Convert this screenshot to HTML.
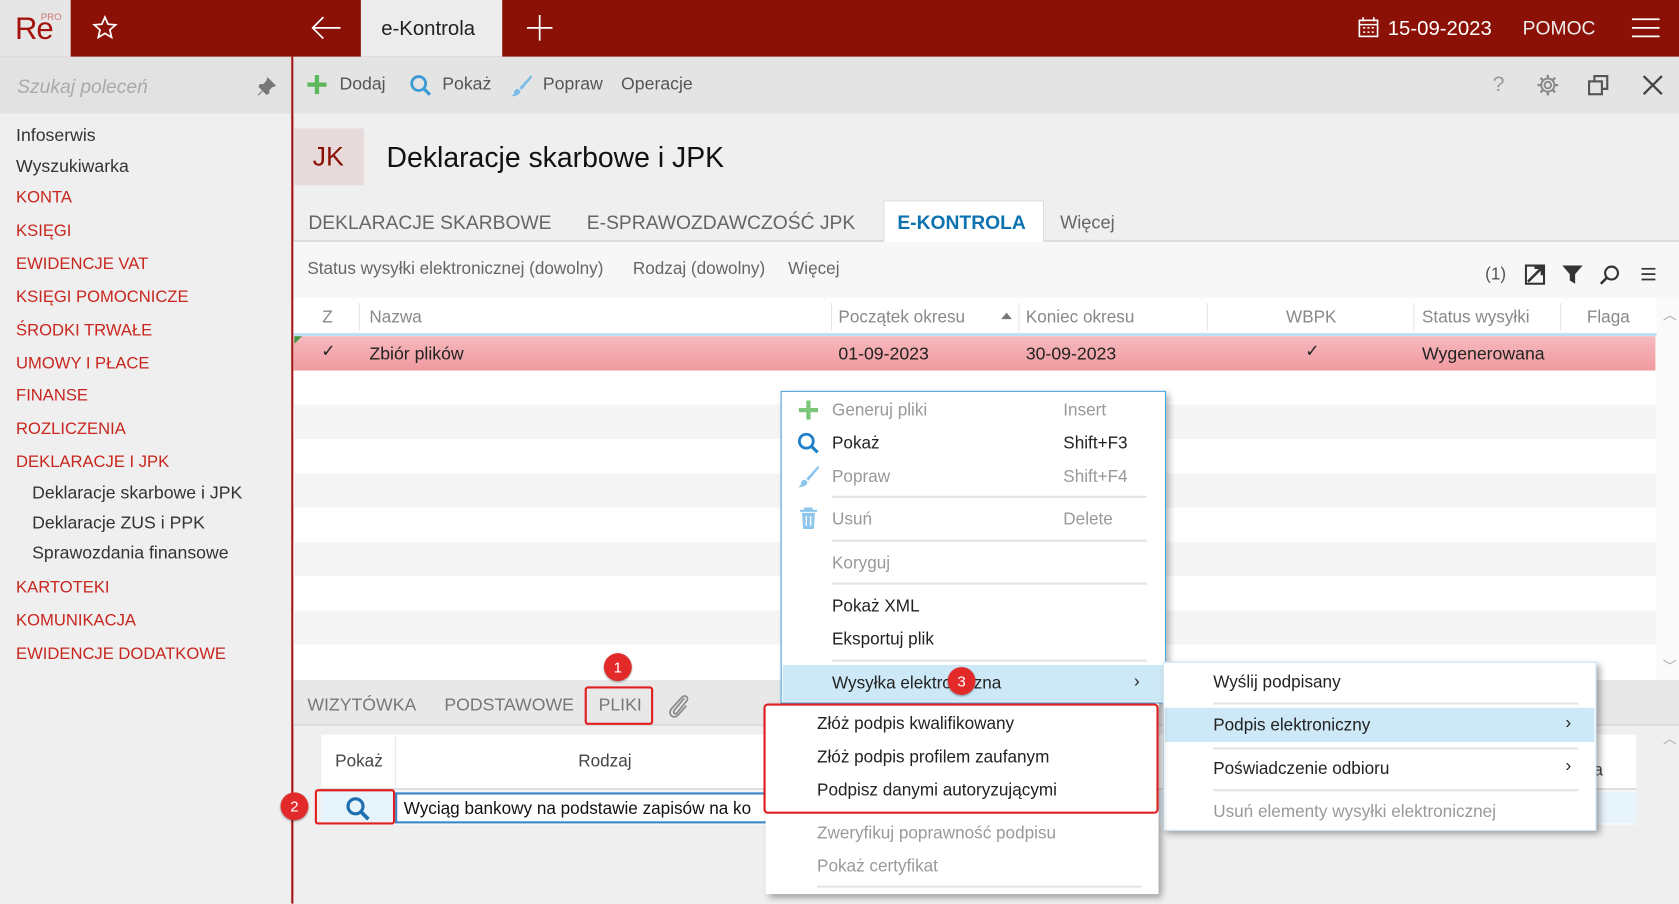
<!DOCTYPE html>
<html><head><meta charset="utf-8"><style>
*{margin:0;padding:0;box-sizing:border-box}
html,body{width:1679px;height:904px;overflow:hidden;background:#efefef}
#w{position:absolute;left:0;top:0;width:1568px;height:844px;transform:scale(1.07079);transform-origin:0 0;font-family:"Liberation Sans",sans-serif;color:#222;overflow:hidden;background:#efefef}
.a{position:absolute;white-space:nowrap}
.t{position:absolute;white-space:nowrap;transform:translateY(-50%);line-height:1}
.red{color:#c8261e;font-size:15.5px}
.sb{color:#333;font-size:16.5px}
.g{color:#999}
.sep{position:absolute;height:2px;background:#e4e4e4}
.badge{position:absolute;width:26px;height:26px;border-radius:50%;background:#e32a2a;color:#fff;font-size:14px;text-align:center;line-height:26px;box-shadow:0 1px 2px rgba(0,0,0,.4)}
</style></head><body><div id="w">
<!-- header -->
<div class="a" style="left:0;top:0;width:1568px;height:53px;background:#8b1106"></div>
<div class="a" style="left:0;top:0;width:66px;height:53px;background:#e6e6e6"></div>
<div class="t" style="left:14px;top:28px;font-size:29px;color:#a5140c;letter-spacing:-1px">Re</div>
<div class="t" style="left:38px;top:16px;font-size:9px;color:#c77">PRO</div>
<svg class="a" style="left:86px;top:14px" width="24" height="24" viewBox="0 0 24 24"><path d="M12 2l2.9 6.6 7.1.6-5.4 4.7 1.6 7-6.2-3.7-6.2 3.7 1.6-7L2 9.2l7.1-.6z" fill="none" stroke="#fff" stroke-width="1.6"/></svg>
<svg class="a" style="left:289px;top:14px" width="30" height="24"><path d="M29 12H3M13 2L3 12l10 10" fill="none" stroke="#fff" stroke-width="1.6"/></svg>
<div class="a" style="left:337px;top:0;width:132px;height:53px;background:#ececec"></div>
<div class="t" style="left:356px;top:27px;font-size:19px;color:#222">e-Kontrola</div>
<svg class="a" style="left:492px;top:14px" width="24" height="24"><path d="M12 0v24M0 12h24" stroke="#fff" stroke-width="1.6"/></svg>
<svg class="a" style="left:1268px;top:16px" width="20" height="20"><rect x="1.5" y="3" width="17" height="15" fill="none" stroke="#fff" stroke-width="1.5"/><path d="M1.5 7h17M5 0v4M15 0v4" stroke="#fff" stroke-width="1.5"/><path d="M5 10h2M9 10h2M13 10h2M5 14h2M9 14h2M13 14h2" stroke="#fff" stroke-width="1.5"/></svg>
<div class="t" style="left:1296px;top:27px;font-size:19px;color:#fff">15-09-2023</div>
<div class="t" style="left:1422px;top:26px;font-size:18px;color:#eee">POMOC</div>
<svg class="a" style="left:1524px;top:16px" width="26" height="20"><path d="M0 2h26M0 10h26M0 18h26" stroke="#fff" stroke-width="1.6"/></svg>
<!-- sidebar -->
<div class="a" style="left:0;top:53px;width:272px;height:53px;background:#e2e2e2"></div>
<div class="t" style="left:16px;top:81px;font-size:18px;font-style:italic;color:#aaa">Szukaj poleceń</div>
<svg class="a" style="left:240px;top:72px" width="18" height="18"><path d="M10 1l7 7-3 1-3 3 0 3-2 1-7-7 1-2 3 0 3-3z M5 13l-4 4" fill="#777" stroke="#777" stroke-width="1"/></svg>
<div class="a" style="left:272px;top:53px;width:2px;height:791px;background:#a31515"></div>
<div class="t sb" style="left:15px;top:127px">Infoserwis</div>
<div class="t sb" style="left:15px;top:156px">Wyszukiwarka</div>
<div class="t red" style="left:15px;top:185px">KONTA</div>
<div class="t red" style="left:15px;top:216px">KSIĘGI</div>
<div class="t red" style="left:15px;top:247px">EWIDENCJE VAT</div>
<div class="t red" style="left:15px;top:278px">KSIĘGI POMOCNICZE</div>
<div class="t red" style="left:15px;top:309px">ŚRODKI TRWAŁE</div>
<div class="t red" style="left:15px;top:340px">UMOWY I PŁACE</div>
<div class="t red" style="left:15px;top:370px">FINANSE</div>
<div class="t red" style="left:15px;top:401px">ROZLICZENIA</div>
<div class="t red" style="left:15px;top:432px">DEKLARACJE I JPK</div>
<div class="t sb" style="left:30px;top:461px">Deklaracje skarbowe i JPK</div>
<div class="t sb" style="left:30px;top:489px">Deklaracje ZUS i PPK</div>
<div class="t sb" style="left:30px;top:517px">Sprawozdania finansowe</div>
<div class="t red" style="left:15px;top:549px">KARTOTEKI</div>
<div class="t red" style="left:15px;top:580px">KOMUNIKACJA</div>
<div class="t red" style="left:15px;top:611px">EWIDENCJE DODATKOWE</div>
<!-- toolbar -->
<div class="a" style="left:274px;top:53px;width:1294px;height:53px;background:#e4e4e4"></div>
<svg class="a" style="left:287px;top:70px" width="18" height="18"><path d="M9 0v18M0 9h18" stroke="#5cb85c" stroke-width="4"/></svg>
<div class="t" style="left:317px;top:79px;font-size:16.5px;color:#555">Dodaj</div>
<svg class="a" style="left:382px;top:69px" width="22" height="22"><circle cx="9" cy="9" r="6.5" fill="none" stroke="#3a9bd5" stroke-width="2.6"/><path d="M13.5 13.5l6 6" stroke="#3a9bd5" stroke-width="3"/></svg>
<div class="t" style="left:413px;top:79px;font-size:16.5px;color:#555">Pokaż</div>
<svg class="a" style="left:476px;top:69px" width="22" height="22"><path d="M20 1L9 13l2 2L21 3z" fill="#7bbde6"/><path d="M8 14c-3 0-4 2-4 4 0 1-1 2-3 3 4 0 9-1 9-5z" fill="#7bbde6"/></svg>
<div class="t" style="left:507px;top:79px;font-size:16.5px;color:#555">Popraw</div>
<div class="t" style="left:580px;top:79px;font-size:16.5px;color:#555">Operacje</div>
<div class="t" style="left:1394px;top:79px;font-size:20px;color:#999">?</div>
<svg class="a" style="left:1435px;top:69px" width="21" height="21" viewBox="0 0 24 24"><circle cx="12" cy="12" r="3.5" fill="none" stroke="#888" stroke-width="2"/><path d="M12 1v4M12 19v4M1 12h4M19 12h4M4.2 4.2l2.8 2.8M17 17l2.8 2.8M4.2 19.8L7 17M17 7l2.8-2.8" stroke="#888" stroke-width="2.5"/><circle cx="12" cy="12" r="7" fill="none" stroke="#888" stroke-width="2"/></svg>
<svg class="a" style="left:1483px;top:70px" width="20" height="20"><rect x="1" y="6" width="12" height="12" fill="none" stroke="#555" stroke-width="2"/><path d="M6 6V1h12v12h-5" fill="none" stroke="#555" stroke-width="2"/></svg>
<svg class="a" style="left:1534px;top:70px" width="19" height="19"><path d="M1 1l17 17M18 1L1 18" stroke="#444" stroke-width="2.2"/></svg>
<!-- title -->
<div class="a" style="left:275px;top:120px;width:65px;height:53px;background:#e6dada"></div>
<div class="t" style="left:292px;top:147px;font-size:25px;color:#8b1106">JK</div>
<div class="t" style="left:361px;top:147px;font-size:26.5px;color:#111">Deklaracje skarbowe i JPK</div>
<!-- tabs -->
<div class="a" style="left:274px;top:224px;width:1294px;height:2px;background:#dcdcdc"></div>
<div class="a" style="left:825px;top:187px;width:150px;height:39px;background:#fff;border:1px solid #ddd;border-bottom:none"></div>
<div class="t" style="left:288px;top:208px;font-size:18px;color:#666">DEKLARACJE SKARBOWE</div>
<div class="t" style="left:548px;top:208px;font-size:18px;color:#666">E-SPRAWOZDAWCZOŚĆ JPK</div>
<div class="t" style="left:838px;top:208px;font-size:18px;color:#0e72b0;font-weight:bold">E-KONTROLA</div>
<div class="t" style="left:990px;top:208px;font-size:17px;color:#666">Więcej</div>
<!-- filter row -->
<div class="a" style="left:274px;top:226px;width:1294px;height:52px;background:#f7f7f7"></div>
<div class="t" style="left:287px;top:252px;font-size:16px;color:#666">Status wysyłki elektronicznej (dowolny)</div>
<div class="t" style="left:591px;top:252px;font-size:16px;color:#666">Rodzaj (dowolny)</div>
<div class="t" style="left:736px;top:252px;font-size:16px;color:#666">Więcej</div>
<div class="t" style="left:1387px;top:257px;font-size:16px;color:#555">(1)</div>
<svg class="a" style="left:1424px;top:247px" width="19" height="19"><rect x="1" y="1" width="17" height="17" fill="none" stroke="#333" stroke-width="2"/><path d="M3 16L16 3M9 3h7v7" fill="none" stroke="#333" stroke-width="2.4"/></svg>
<svg class="a" style="left:1459px;top:247px" width="19" height="19"><path d="M0 1h19l-7 8v9l-5-3V9z" fill="#333"/></svg>
<svg class="a" style="left:1494px;top:247px" width="19" height="19"><circle cx="11" cy="8" r="6" fill="none" stroke="#333" stroke-width="2"/><path d="M7 12l-6 6" stroke="#333" stroke-width="2.4"/></svg>
<svg class="a" style="left:1533px;top:250px" width="13" height="12"><path d="M0 1h13M0 6h13M0 11h13" stroke="#333" stroke-width="1.6"/></svg>
<!-- grid -->
<div class="a" style="left:274px;top:278px;width:1273px;height:357px;background:#fff"></div>
<div class="a" style="left:274px;top:378px;width:1273px;height:32px;background:#f5f5f5"></div>
<div class="a" style="left:274px;top:442px;width:1273px;height:32px;background:#f5f5f5"></div>
<div class="a" style="left:274px;top:506px;width:1273px;height:32px;background:#f5f5f5"></div>
<div class="a" style="left:274px;top:570px;width:1273px;height:32px;background:#f5f5f5"></div>
<div class="a" style="left:1547px;top:278px;width:21px;height:357px;background:#fafafa"></div>
<div class="t" style="left:1553px;top:294px;font-size:13px;color:#aaa">︿</div>
<div class="t" style="left:1553px;top:622px;font-size:13px;color:#aaa">﹀</div>
<div class="a" style="left:274px;top:311px;width:1273px;height:3px;background:#bfe0f2"></div>
<div class="a" style="left:335px;top:283px;width:1px;height:26px;background:#e4e4e4"></div>
<div class="a" style="left:776px;top:283px;width:1px;height:26px;background:#e4e4e4"></div>
<div class="a" style="left:951px;top:283px;width:1px;height:26px;background:#e4e4e4"></div>
<div class="a" style="left:1127px;top:283px;width:1px;height:26px;background:#e4e4e4"></div>
<div class="a" style="left:1320px;top:283px;width:1px;height:26px;background:#e4e4e4"></div>
<div class="a" style="left:1457px;top:283px;width:1px;height:26px;background:#e4e4e4"></div>
<div class="t" style="left:301px;top:297px;font-size:16px;color:#888">Z</div>
<div class="t" style="left:345px;top:297px;font-size:16px;color:#888">Nazwa</div>
<div class="t" style="left:783px;top:297px;font-size:16px;color:#888">Początek okresu</div>
<div class="a" style="left:935px;top:292px;width:0;height:0;border-left:5px solid transparent;border-right:5px solid transparent;border-bottom:6px solid #777"></div>
<div class="t" style="left:958px;top:297px;font-size:16px;color:#888">Koniec okresu</div>
<div class="t" style="left:1201px;top:297px;font-size:16px;color:#888">WBPK</div>
<div class="t" style="left:1328px;top:297px;font-size:16px;color:#888">Status wysyłki</div>
<div class="t" style="left:1482px;top:297px;font-size:16px;color:#888">Flaga</div>
<div class="a" style="left:274px;top:314px;width:1272px;height:32px;background:linear-gradient(#f6b9bd,#f09aa0)"></div>
<div class="a" style="left:275px;top:314px;width:0;height:0;border-right:7px solid transparent;border-top:7px solid #3c9a3c"></div>
<div class="t" style="left:300px;top:329px;font-size:16px">✓</div>
<div class="t" style="left:345px;top:331px;font-size:16.5px">Zbiór plików</div>
<div class="t" style="left:783px;top:331px;font-size:16.5px">01-09-2023</div>
<div class="t" style="left:958px;top:331px;font-size:16.5px">30-09-2023</div>
<div class="t" style="left:1219px;top:329px;font-size:16px">✓</div>
<div class="t" style="left:1328px;top:331px;font-size:16.5px">Wygenerowana</div>
<!-- bottom panel -->
<div class="a" style="left:274px;top:635px;width:1294px;height:42px;background:#e8e8e8"></div>
<div class="a" style="left:274px;top:676px;width:1294px;height:2px;background:#dcdcdc"></div>
<div class="t" style="left:287px;top:659px;font-size:16.5px;color:#777">WIZYTÓWKA</div>
<div class="t" style="left:415px;top:659px;font-size:16.5px;color:#777">PODSTAWOWE</div>
<div class="t" style="left:559px;top:659px;font-size:16.5px;color:#777">PLIKI</div>
<div class="a" style="left:546px;top:641px;width:64px;height:36px;border:2px solid #e02020;border-radius:3px"></div>
<svg class="a" style="left:623px;top:646px" width="22" height="26"><path d="M16 6L7 17c-2 2 0 5 2 3l9-11c3-3-1-7-4-4L4 16c-4 5 2 10 6 6l8-9" fill="none" stroke="#888" stroke-width="1.6"/></svg>
<div class="badge" style="left:564px;top:610px">1</div>
<div class="a" style="left:300px;top:686px;width:1228px;height:84px;background:#fff"></div>
<div class="a" style="left:369px;top:688px;width:1px;height:48px;background:#e4e4e4"></div>
<div class="a" style="left:300px;top:736px;width:1228px;height:2px;background:#ddd"></div>
<div class="t" style="left:313px;top:712px;font-size:16px;color:#444">Pokaż</div>
<div class="t" style="left:540px;top:712px;font-size:16px;color:#444">Rodzaj</div>
<div class="t" style="left:1488px;top:720px;font-size:16px;color:#444">a</div>
<div class="a" style="left:300px;top:739px;width:1228px;height:30px;background:#e8f4fb"></div>
<div class="a" style="left:369px;top:740px;width:360px;height:29px;border:2px solid #3a86c8;border-right:none;background:#fff"></div>
<div class="t" style="left:377px;top:756px;font-size:16px;color:#111">Wyciąg bankowy na podstawie zapisów na ko</div>
<svg class="a" style="left:322px;top:743px" width="24" height="24"><circle cx="10" cy="10" r="7" fill="none" stroke="#1f6fb0" stroke-width="3"/><path d="M15 15l7 7" stroke="#1f6fb0" stroke-width="3.5"/></svg>
<div class="a" style="left:294px;top:737px;width:75px;height:33px;border:2px solid #e02020;border-radius:3px"></div>
<div class="badge" style="left:262px;top:740px">2</div>
<div class="t" style="left:1553px;top:690px;font-size:13px;color:#aaa">︿</div>
<!-- context menu 1 -->
<div class="a" style="left:729px;top:365px;width:360px;height:292px;background:#fff;border:1px solid #4aa3df;box-shadow:3px 3px 6px rgba(0,0,0,.3)"></div>
<svg class="a" style="left:746px;top:374px" width="18" height="18"><path d="M9 0v18M0 9h18" stroke="#7cc67c" stroke-width="4"/></svg>
<div class="t g" style="left:777px;top:384px;font-size:16px">Generuj pliki</div>
<div class="t g" style="left:993px;top:384px;font-size:16px">Insert</div>
<svg class="a" style="left:744px;top:403px" width="22" height="22"><circle cx="9" cy="9" r="6.5" fill="none" stroke="#1f7fc8" stroke-width="2.6"/><path d="M13.5 13.5l6 6" stroke="#1f7fc8" stroke-width="3"/></svg>
<div class="t" style="left:777px;top:415px;font-size:16px;color:#222">Pokaż</div>
<div class="t" style="left:993px;top:415px;font-size:16px;color:#222">Shift+F3</div>
<svg class="a" style="left:744px;top:434px" width="22" height="22"><path d="M20 1L9 13l2 2L21 3z" fill="#8cc6ec"/><path d="M8 14c-3 0-4 2-4 4 0 1-1 2-3 3 4 0 9-1 9-5z" fill="#8cc6ec"/></svg>
<div class="t g" style="left:777px;top:446px;font-size:16px">Popraw</div>
<div class="t g" style="left:993px;top:446px;font-size:16px">Shift+F4</div>
<div class="sep" style="left:777px;top:463px;width:294px"></div>
<svg class="a" style="left:746px;top:474px" width="18" height="21"><path d="M1 3h16M6 3V1h6v2" stroke="#8cc6ec" stroke-width="2" fill="none"/><path d="M3 5h12l-1 15H4z" fill="#8cc6ec"/><path d="M7 8v9M11 8v9" stroke="#fff" stroke-width="1.3"/></svg>
<div class="t g" style="left:777px;top:486px;font-size:16px">Usuń</div>
<div class="t g" style="left:993px;top:486px;font-size:16px">Delete</div>
<div class="sep" style="left:777px;top:504px;width:294px"></div>
<div class="t g" style="left:777px;top:527px;font-size:16px">Koryguj</div>
<div class="sep" style="left:777px;top:544px;width:294px"></div>
<div class="t" style="left:777px;top:567px;font-size:16px;color:#222">Pokaż XML</div>
<div class="t" style="left:777px;top:598px;font-size:16px;color:#222">Eksportuj plik</div>
<div class="sep" style="left:777px;top:616px;width:294px"></div>
<div class="a" style="left:731px;top:621px;width:357px;height:34px;background:#cde8f6"></div>
<div class="t" style="left:777px;top:639px;font-size:16px;color:#222">Wysyłka elektroniczna</div>
<div class="t" style="left:1059px;top:637px;font-size:16px;color:#222">›</div>
<div class="badge" style="left:885px;top:623px;width:26px">3</div>
<!-- submenu right -->
<div class="a" style="left:1086px;top:618px;width:405px;height:158px;background:#fff;border:1px solid #cde3f2;box-shadow:3px 3px 6px rgba(0,0,0,.35)"></div>
<div class="t" style="left:1133px;top:638px;font-size:16px;color:#222">Wyślij podpisany</div>
<div class="sep" style="left:1133px;top:656px;width:341px"></div>
<div class="a" style="left:1088px;top:661px;width:401px;height:32px;background:#cde8f6"></div>
<div class="t" style="left:1133px;top:678px;font-size:16px;color:#222">Podpis elektroniczny</div>
<div class="t" style="left:1462px;top:676px;font-size:16px;color:#222">›</div>
<div class="sep" style="left:1133px;top:698px;width:341px"></div>
<div class="t" style="left:1133px;top:719px;font-size:16px;color:#222">Poświadczenie odbioru</div>
<div class="t" style="left:1462px;top:716px;font-size:16px;color:#222">›</div>
<div class="sep" style="left:1133px;top:737px;width:341px"></div>
<div class="t g" style="left:1133px;top:759px;font-size:16px">Usuń elementy wysyłki elektronicznej</div>
<!-- submenu lower -->
<div class="a" style="left:715px;top:657px;width:367px;height:178px;background:#fff;box-shadow:3px 3px 6px rgba(0,0,0,.35)"></div>
<div class="t" style="left:763px;top:677px;font-size:16px;color:#222">Złóż podpis kwalifikowany</div>
<div class="t" style="left:763px;top:708px;font-size:16px;color:#222">Złóż podpis profilem zaufanym</div>
<div class="t" style="left:763px;top:739px;font-size:16px;color:#222">Podpisz danymi autoryzującymi</div>
<div class="a" style="left:713px;top:657px;width:369px;height:103px;border:2px solid #e02020;border-radius:4px"></div>
<div class="t g" style="left:763px;top:779px;font-size:16px">Zweryfikuj poprawność podpisu</div>
<div class="t g" style="left:763px;top:810px;font-size:16px">Pokaż certyfikat</div>
<div class="sep" style="left:763px;top:827px;width:303px"></div>
</div></body></html>
